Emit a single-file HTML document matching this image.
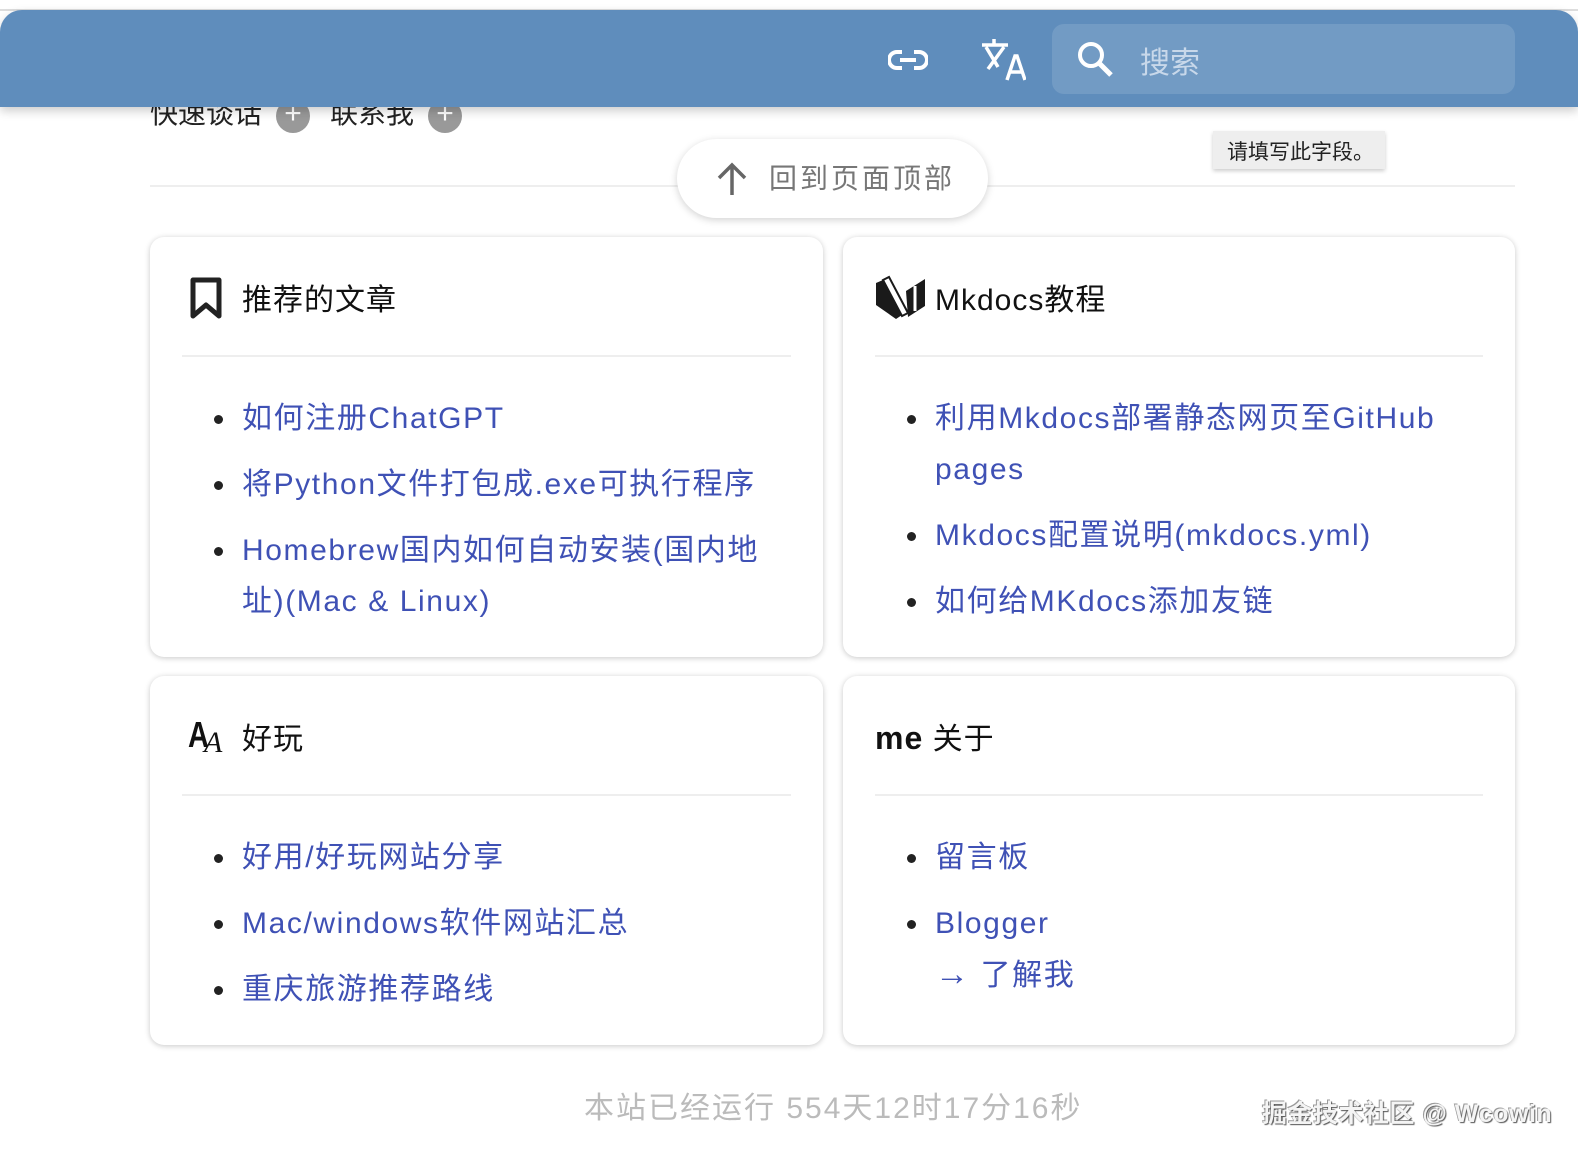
<!DOCTYPE html>
<html><head><meta charset="utf-8"><style>
*{margin:0;padding:0;box-sizing:border-box}
body{width:1578px;height:1160px;background:#fff;font-family:"Liberation Sans","Noto Sans CJK SC",sans-serif;position:relative;overflow:hidden}
.topline{position:absolute;left:0;right:0;top:9px;height:2px;background:#ddd}
.header{position:absolute;left:0;top:10px;width:1578px;height:97px;background:#5f8dbc;border-radius:22px 22px 0 0;box-shadow:0 4px 10px rgba(0,0,0,.2);z-index:5}
.search{position:absolute;left:1052px;top:14px;width:463px;height:70px;border-radius:12px;background:#729bc4}
.search span{position:absolute;left:88px;top:14px;font-size:30px;color:#c8d8ea}
.behind{position:absolute;left:150px;top:92px;font-size:28px;color:#222}
.behind i{display:inline-block;width:34px;height:34px;border-radius:50%;background:#999;vertical-align:middle;margin:0 20px 0 14px;position:relative}
.behind i:after{content:"+";position:absolute;left:0;right:0;top:-2px;text-align:center;color:#fff;font-size:30px;font-style:normal}
.hr{position:absolute;left:150px;top:185px;width:1365px;height:2px;background:#eee}
.totop{position:absolute;left:677px;top:139px;width:311px;height:79px;border-radius:40px;background:#fff;box-shadow:0 2px 8px rgba(0,0,0,.18);font-size:28px;color:#777;letter-spacing:3px}
.totop span{position:absolute;left:92px;top:18px}
.tip{position:absolute;left:1213px;top:131px;width:172px;height:38px;background:#eee;box-shadow:0 2px 4px rgba(0,0,0,.2);font-size:21px;color:#222;padding:5px 0 0 14px}
.card{position:absolute;background:#fff;border-radius:14px;box-shadow:0 1px 6px rgba(0,0,0,.22);padding:0 32px}
.card h3{font-weight:normal;font-size:30px;color:#111;height:120px;border-bottom:2px solid #eee;position:relative}
.card h3 .t{position:absolute;top:38px;left:60px;letter-spacing:1px}
.card ul{list-style:none;margin-top:36px;padding-left:60px;padding-right:24px}
.card li{position:relative;font-size:30px;color:#3f51b5;line-height:51px;margin-bottom:15px;letter-spacing:1.6px}
.card li:before{content:"";position:absolute;left:-28px;top:22px;width:9px;height:9px;border-radius:50%;background:#222}
.card li.nb:before{display:none}
.foot{position:absolute;left:584px;top:1083px;font-size:30px;color:#bbb;letter-spacing:2px}
.wm{position:absolute;left:1262px;top:1094px;font-size:25px;color:#f4f4f4;font-weight:bold;text-shadow:1px 1px 1px #555,-1px -1px 0 #999;letter-spacing:.5px}
</style></head><body>
<div class="topline"></div>
<div class="behind">快速谈话<i></i>联系我<i></i></div>
<div class="header">
<svg style="position:absolute;left:888px;top:38px" width="40" height="24" viewBox="0 0 40 24"><path d="M14 4H9a8 8 0 0 0 0 16h5M26 4h5a8 8 0 0 1 0 16h-5M12 12h16" fill="none" stroke="#fff" stroke-width="4"/></svg>
<svg style="position:absolute;left:980px;top:28px" width="46" height="44" viewBox="0 0 46 44"><path d="M2 7h26M14 1v6M6 9l12 20M24 9L8 31" stroke="#fff" stroke-width="3.5" fill="none"/><path d="M27 42l8-24h2l8 24M30 34h12" stroke="#fff" stroke-width="3.5" fill="none"/></svg>
<div class="search"><svg style="position:absolute;left:24px;top:16px" width="38" height="38" viewBox="0 0 38 38"><circle cx="15" cy="15" r="11" stroke="#fff" stroke-width="4" fill="none"/><path d="M23 23l12 12" stroke="#fff" stroke-width="5"/></svg><span>搜索</span></div>
</div>
<div class="hr"></div>
<div class="totop"><svg style="position:absolute;left:38px;top:22px" width="34" height="36" viewBox="0 0 34 36"><path d="M17 34V4M4 17L17 4l13 13" stroke="#666" stroke-width="3.5" fill="none"/></svg><span>回到页面顶部</span></div>
<div class="tip">请填写此字段。</div>

<div class="card" style="left:150px;top:237px;width:673px;height:420px">
<h3><svg style="position:absolute;left:8px;top:40px" width="32" height="42" viewBox="0 0 32 42"><path d="M3 3h26v36L16 28 3 39z" fill="none" stroke="#222" stroke-width="5" stroke-linejoin="round"/></svg><span class="t">推荐的文章</span></h3>
<ul><li>如何注册ChatGPT</li><li>将Python文件打包成.exe可执行程序</li><li>Homebrew国内如何自动安装(国内地址)(Mac &amp; Linux)</li></ul>
</div>
<div class="card" style="left:843px;top:237px;width:672px;height:420px">
<h3><svg style="position:absolute;left:0;top:38px" width="52" height="46" viewBox="0 0 52 46"><path d="M1 8L8 5L27 40L21 44L1 30Z" fill="#1a1a1a"/><path d="M8 5L14 2L33 38L27 41Z" fill="#fff" stroke="#1a1a1a" stroke-width="2"/><path d="M31 16L50 4V31L33 42Z" fill="#1a1a1a"/><path d="M40 11V36" stroke="#fff" stroke-width="3"/></svg><span class="t">Mkdocs教程</span></h3>
<ul><li>利用Mkdocs部署静态网页至GitHub pages</li><li>Mkdocs配置说明(mkdocs.yml)</li><li>如何给MKdocs添加友链</li></ul>
</div>
<div class="card" style="left:150px;top:676px;width:673px;height:369px">
<h3><span style="position:absolute;left:6px;top:38px;font-weight:bold;font-size:36px;font-family:'Liberation Sans',sans-serif;display:inline-block;transform:scaleX(.8);transform-origin:left">A</span><span style="position:absolute;left:22px;top:50px;font-style:italic;font-size:30px;font-family:'Liberation Serif',serif">A</span><span class="t">好玩</span></h3>
<ul><li>好用/好玩网站分享</li><li>Mac/windows软件网站汇总</li><li>重庆旅游推荐路线</li></ul>
</div>
<div class="card" style="left:843px;top:676px;width:672px;height:369px">
<h3><span class="t" style="left:0"><b style="font-size:32px">me</b> 关于</span></h3>
<ul><li>留言板</li><li style="margin-bottom:0">Blogger</li><li class="nb"><span style="font-size:34px">→</span> 了解我</li></ul>
</div>
<div class="foot">本站已经运行 554天12时17分16秒</div>
<div class="wm">掘金技术社区 @ Wcowin</div>
</body></html>
